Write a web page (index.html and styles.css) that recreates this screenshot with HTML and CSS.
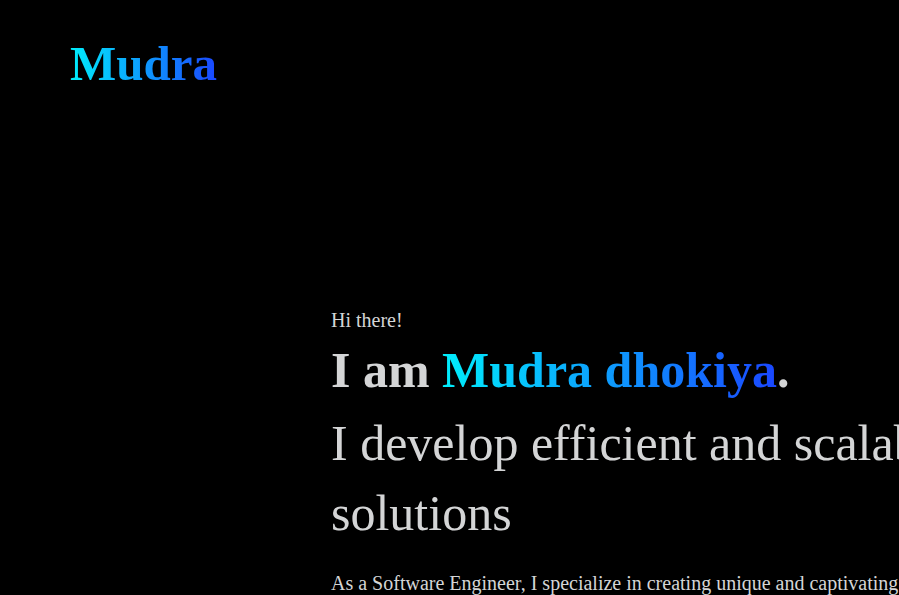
FILE: index.html
```html
<!DOCTYPE html>
<html lang="en">
<head>
<meta charset="utf-8">
<title>Mudra</title>
<link rel="stylesheet" href="styles.css">
</head>
<body>
<header class="site-header">
  <a class="logo gradient-text" href="#">Mudra</a>
</header>
<main class="hero">
  <p class="greeting">Hi there!</p>
  <h1 class="hero-title">I am <span class="gradient-text">Mudra dhokiya</span>.</h1>
  <h2 class="hero-subtitle">I develop efficient and scalable software solutions</h2>
  <p class="hero-text">As a Software Engineer, I specialize in creating unique and captivating digital experiences.</p>
</main>
</body>
</html>
```
FILE: styles.css
```css
html, body {
  margin: 0;
  padding: 0;
  background: #000;
  color: #d4d5d6;
  font-family: "Liberation Serif", "Times New Roman", serif;
  overflow: hidden;
}
.gradient-text {
  background: linear-gradient(90deg, #00eefc 0%, #1a47ff 100%);
  -webkit-background-clip: text;
  background-clip: text;
  color: transparent;
}
.site-header {
  padding: 36px 70px 0;
  height: 89px;
}
.logo {
  font-size: 49px;
  font-weight: bold;
  text-decoration: none;
  display: inline-block;
  line-height: 56px;
}
.hero {
  padding: 183px 0 0 331px;
  width: 820px;
}
.greeting {
  font-size: 20px;
  margin: 0;
  line-height: 24px;
}
.hero-title {
  font-size: 50px;
  font-weight: bold;
  margin: 7px 0 0;
  line-height: 62px;
  white-space: nowrap;
}
.hero-subtitle {
  font-size: 50px;
  font-weight: normal;
  margin: 7px 0 0;
  line-height: 70px;
}
.hero-text {
  font-size: 20px;
  margin: 24px 0 0;
  white-space: nowrap;
}
```
